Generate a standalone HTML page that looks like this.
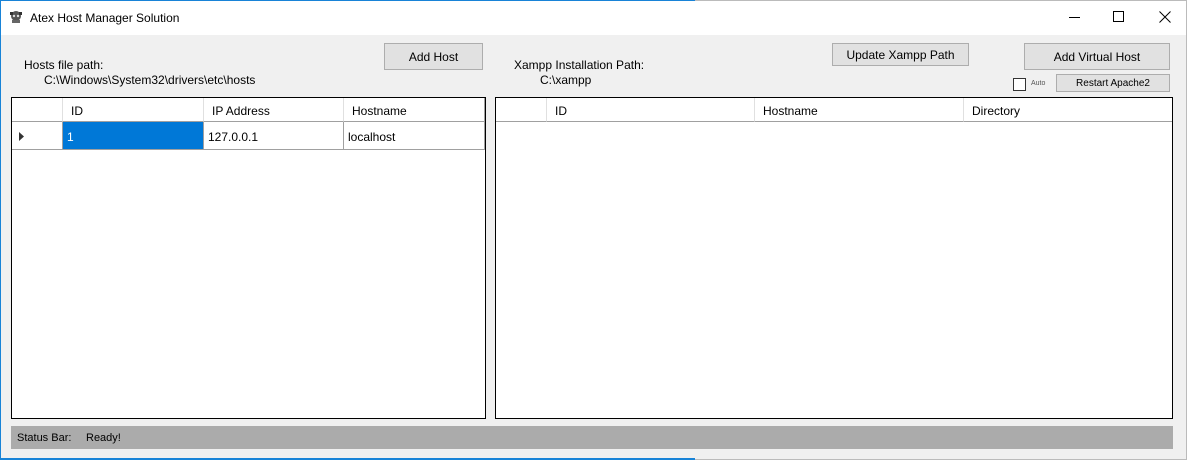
<!DOCTYPE html>
<html><head><style>
*{margin:0;padding:0;box-sizing:border-box}
body{width:1190px;height:460px;background:#fff;position:relative;overflow:hidden;font-family:"Liberation Sans",sans-serif;font-size:12px;color:#000}
.a{position:absolute}
.win{left:0;top:0;width:1187px;height:460px;background:#f0f0f0;border:1px solid #bbb}
.title{left:1px;top:1px;width:1185px;height:34px;background:#fff}
.btn{position:absolute;background:#e1e1e1;border:1px solid #adadad;text-align:center;font-size:12px}
.grid{position:absolute;background:#fff;border:1px solid #000}
.hdr{position:absolute;top:0;height:24px;border-right:1px solid #e0e0e0;border-bottom:1px solid #a0a0a0;padding-left:8px;line-height:26px;font-size:12px}
.cell{position:absolute;height:28px;border-right:1px solid #a0a0a0;border-bottom:1px solid #a0a0a0;line-height:30px;padding-left:4px}
</style></head><body>
<div class="a win"></div>
<div class="a" style="left:0;top:0;width:695px;height:2px;background:#1883d7"></div>
<div class="a" style="left:0;top:0;width:1px;height:460px;background:#1883d7"></div>
<div class="a" style="left:0;top:458px;width:695px;height:2px;background:#1883d7"></div>
<div class="a title"></div>
<svg class="a" style="left:8px;top:9px" width="16" height="16" viewBox="0 0 16 16"><circle cx="8" cy="7" r="5" fill="#555"/><rect x="2" y="3" width="3" height="3" fill="#333"/><rect x="11" y="3" width="3" height="3" fill="#333"/><rect x="4" y="11" width="8" height="3" fill="#666"/><circle cx="6" cy="7" r="1.2" fill="#ddd"/><circle cx="10" cy="7" r="1.2" fill="#ddd"/></svg>
<div class="a" style="left:30px;top:11px;font-size:12px">Atex Host Manager Solution</div>
<div class="a" style="left:1069px;top:17px;width:11px;height:1px;background:#000"></div>
<div class="a" style="left:1113px;top:11px;width:11px;height:11px;border:1px solid #000"></div>
<svg class="a" style="left:1159px;top:11px" width="12" height="12"><path d="M0.5 0.5L11.5 11.5M11.5 0.5L0.5 11.5" stroke="#000" stroke-width="1"/></svg>

<div class="a" style="left:24px;top:58px">Hosts file path:</div>
<div class="a" style="left:44px;top:73px">C:\Windows\System32\drivers\etc\hosts</div>
<div class="btn" style="left:384px;top:43px;width:99px;height:27px;line-height:26px">Add Host</div>
<div class="a" style="left:514px;top:58px">Xampp Installation Path:</div>
<div class="a" style="left:540px;top:73px">C:\xampp</div>
<div class="btn" style="left:832px;top:43px;width:137px;height:23px;line-height:22px">Update Xampp Path</div>
<div class="btn" style="left:1024px;top:43px;width:146px;height:27px;line-height:26px">Add Virtual Host</div>
<div class="btn" style="left:1056px;top:74px;width:114px;height:18px;line-height:18px;font-size:10px">Restart Apache2</div>
<div class="a" style="left:1013px;top:78px;width:13px;height:13px;background:#fff;border:1px solid #333"></div>
<div class="a" style="left:1031px;top:80px;font-size:7px;color:#555">Auto</div>

<div class="grid" style="left:11px;top:97px;width:475px;height:322px">
<div class="hdr" style="left:0;width:51px"></div>
<div class="hdr" style="left:51px;width:141px">ID</div>
<div class="hdr" style="left:192px;width:140px">IP Address</div>
<div class="hdr" style="left:332px;width:141px;border-right:1px solid #a0a0a0">Hostname</div>
<div class="cell" style="left:0;top:24px;width:51px"></div>
<svg class="a" style="left:7px;top:34px" width="6" height="9"><path d="M0 0L5 4.5L0 9Z" fill="#333"/></svg>
<div class="cell" style="left:51px;top:24px;width:141px;background:#0078d7;color:#fff">1</div>
<div class="cell" style="left:192px;top:24px;width:140px">127.0.0.1</div>
<div class="cell" style="left:332px;top:24px;width:141px">localhost</div>
</div>

<div class="grid" style="left:495px;top:97px;width:678px;height:322px">
<div class="hdr" style="left:0;width:51px"></div>
<div class="hdr" style="left:51px;width:208px">ID</div>
<div class="hdr" style="left:259px;width:209px">Hostname</div>
<div class="hdr" style="left:468px;width:208px;border-right:none">Directory</div>
</div>

<div class="a" style="left:11px;top:426px;width:1162px;height:23px;background:#ababab"></div>
<div class="a" style="left:17px;top:432px;font-size:11px">Status Bar:</div>
<div class="a" style="left:86px;top:432px;font-size:11px">Ready!</div>
</body></html>
